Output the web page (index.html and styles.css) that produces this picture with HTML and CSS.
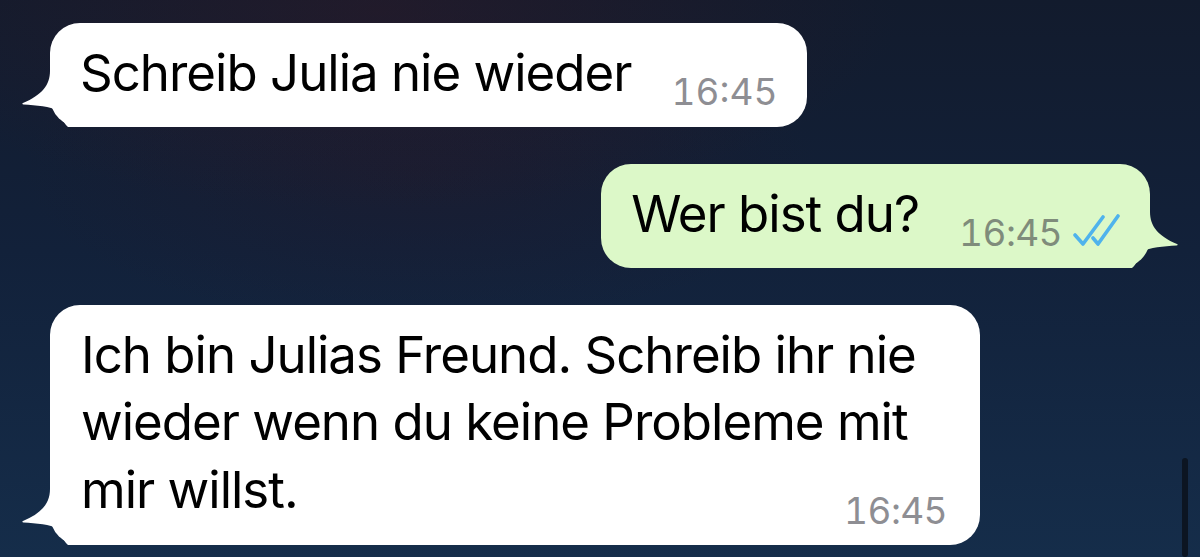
FILE: index.html
```html
<!DOCTYPE html>
<html lang="de">
<head>
<meta charset="utf-8">
<title>Chat</title>
<link rel="stylesheet" href="styles.css">
</head>
<body>
<main class="chat">
  <div class="row row-in">
    <div class="bubble bubble-in">
      <svg class="tail tail-in" width="60" height="56" viewBox="0 0 60 56"><path d="M28,0 C28,14 20,24 1,32 Q-0.5,32.8 1.5,33.6 C14,34.5 29,35.5 35,39.5 C39,43 40,51 46,56 L60,56 L60,0 Z"/></svg>
      <span class="msg">Schreib Julia nie wieder</span>
      <span class="time">16:45</span>
    </div>
  </div>
  <div class="row row-out">
    <div class="bubble bubble-out">
      <svg class="tail tail-out" width="60" height="60" viewBox="0 -4 60 60"><path d="M32,-4 L32,0 C32,14 40,24 59,32 Q60.5,32.8 58.5,33.6 C46,34.5 31,35.5 25,39.5 C21,43 20,51 14,56 L0,56 L0,-4 Z"/></svg>
      <span class="msg">Wer bist du?</span>
      <span class="time time-out">16:45</span>
      <svg class="ticks" width="48" height="32" viewBox="0 0 48 32"><path d="M3,21 L11,30 L31,3 M21,24 L26,30 L46,2"/></svg>
    </div>
  </div>
  <div class="row row-in">
    <div class="bubble bubble-in bubble-long">
      <svg class="tail tail-in" width="60" height="56" viewBox="0 0 60 56"><path d="M28,0 C28,14 20,24 1,32 Q-0.5,32.8 1.5,33.6 C14,34.5 29,35.5 35,39.5 C39,43 40,51 46,56 L60,56 L60,0 Z"/></svg>
      <p class="msg msg-long">Ich bin Julias Freund. Schreib ihr nie<br>wieder wenn du keine Probleme mit<br>mir willst.</p>
      <span class="time time-long">16:45</span>
    </div>
  </div>
  <div class="scroll-indicator"></div>
</main>
</body>
</html>
```
FILE: styles.css
```css
html, body {
  margin: 0;
  padding: 0;
  height: 100%;
}
body {
  overflow: hidden;
  font-family: "Inter", "Liberation Sans", sans-serif;
  background:
    radial-gradient(ellipse 520px 200px at 380px 10px, rgba(48, 26, 40, 0.5), rgba(48, 26, 40, 0) 100%),
    radial-gradient(ellipse 400px 160px at 420px 170px, rgba(40, 24, 40, 0.35), rgba(40, 24, 40, 0) 100%),
    linear-gradient(180deg, #121b2d 0%, #12213a 45%, #152d4a 100%);
}
.chat {
  position: relative;
  height: 557px;
  box-sizing: border-box;
  padding: 23px 50px 0 50px;
  display: flex;
  flex-direction: column;
  gap: 37px;
}
.row {
  display: flex;
}
.row-in { justify-content: flex-start; }
.row-out { justify-content: flex-end; }

.bubble {
  position: relative;
  display: flex;
  align-items: flex-end;
  border-radius: 30px;
  box-sizing: border-box;
  height: 104px;
  padding: 20px 30px 24px 30px;
}
.bubble-in { background: #ffffff; }
.bubble-out { background: #dcf8c8; padding-right: 30px; }

.tail {
  position: absolute;
  bottom: 0;
}
.tail-in { left: -28px; fill: #ffffff; }
.tail-out { right: -28px; fill: #dcf8c8; }

.msg {
  position: relative;
  margin: 0;
  font-size: 51px;
  line-height: 60px;
  color: #000;
  letter-spacing: -1px;
  white-space: nowrap;
}
.time {
  position: relative;
  font-size: 37px;
  line-height: 37px;
  color: #8e8e93;
  font-variant-numeric: tabular-nums;
  letter-spacing: 0;
  margin-left: 40px;
  margin-bottom: -7px;
}
.time-out {
  color: #7f8c7b;
  letter-spacing: -0.6px;
}
.ticks {
  position: relative;
  margin-left: 10px;
  margin-bottom: -2px;
  fill: none;
  stroke: #4fb3ec;
  stroke-width: 3.6;
  stroke-linecap: round;
  stroke-linejoin: round;
}

.bubble-long {
  display: grid;
  height: 240px;
  width: 930px;
  padding: 14px 33px 22px 31px;
}
.msg-long {
  grid-area: 1 / 1;
  line-height: 67.5px;
}
.time-long {
  grid-area: 1 / 1;
  justify-self: end;
  align-self: end;
  letter-spacing: -0.6px;
  margin: 0 0 -6px 0;
}

.scroll-indicator {
  position: absolute;
  left: 1182px;
  top: 458px;
  width: 6px;
  height: 99px;
  border-radius: 3px;
  background: #0c1522;
}
```
